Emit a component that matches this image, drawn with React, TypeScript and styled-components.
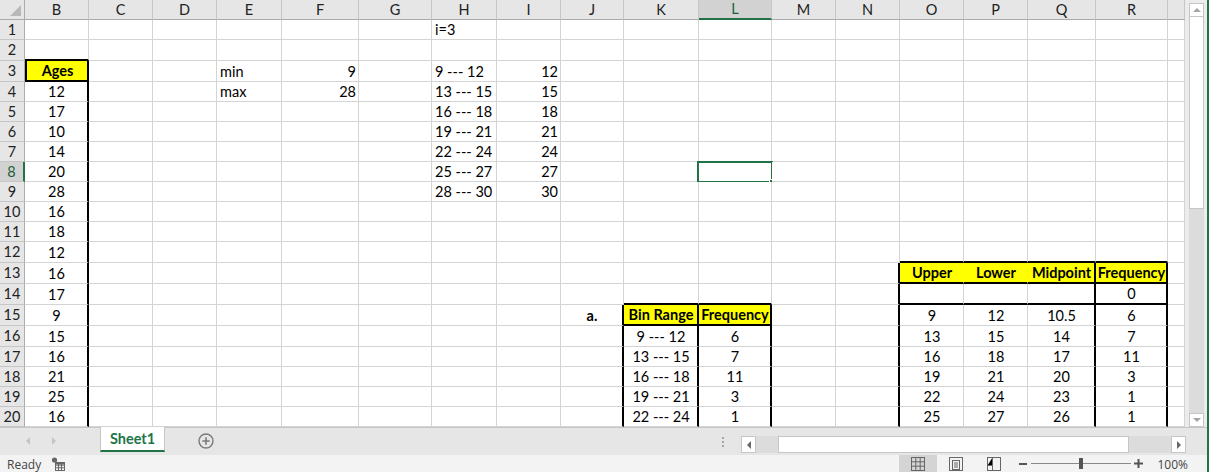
import React from 'react';
import styled, { createGlobalStyle } from 'styled-components';

const GlobalStyle = createGlobalStyle`
  *, *::before, *::after { box-sizing: border-box; }
  html, body { margin: 0; padding: 0; background: #fff; overflow: hidden; }
  body { font-family: Lato, "Liberation Sans", sans-serif; }
`;

const COLS: [string, number][] = [
  ['B', 64], ['C', 64], ['D', 64], ['E', 65], ['F', 77], ['G', 73], ['H', 65], ['I', 64], ['J', 63],
  ['K', 75], ['L', 73], ['M', 64], ['N', 64], ['O', 64], ['P', 64], ['Q', 68], ['R', 72], ['S', 17],
];
// heights of rows 1..21 as they appear in the screenshot
const ROW_H = [20, 21, 21, 20, 20, 20, 20, 20, 20, 20, 20, 21, 21, 21, 21, 21, 20, 20, 20, 20, 1];
const ROWS = ROW_H.length;
const YELLOW = '#ffff00';
const GREEN = '#217346';

type Align = 'l' | 'c' | 'r';
interface CellData { v: string; a?: Align; b?: boolean; fill?: string }

const data: Record<string, CellData> = {};
const put = (key: string, v: string, a: Align = 'c', b = false, fill?: string) => {
  data[key] = { v, a, b, fill };
};

put('H1', 'i=3', 'l');
put('B3', 'Ages', 'c', true, YELLOW);
[12, 17, 10, 14, 20, 28, 16, 18, 12, 16, 17, 9, 15, 16, 21, 25, 16].forEach((n, i) => put(`B${i + 4}`, String(n)));
put('E3', 'min', 'l');
put('F3', '9', 'r');
put('E4', 'max', 'l');
put('F4', '28', 'r');
['9 --- 12', '13 --- 15', '16 --- 18', '19 --- 21', '22 --- 24', '25 --- 27', '28 --- 30'].forEach((s, i) => put(`H${i + 3}`, s, 'l'));
[12, 15, 18, 21, 24, 27, 30].forEach((n, i) => put(`I${i + 3}`, String(n), 'r'));
put('J15', 'a.', 'c', true);
put('K15', 'Bin Range', 'c', true, YELLOW);
put('L15', 'Frequency', 'c', true, YELLOW);
['9 --- 12', '13 --- 15', '16 --- 18', '19 --- 21', '22 --- 24'].forEach((s, i) => put(`K${i + 16}`, s));
['6', '7', '11', '3', '1'].forEach((s, i) => put(`L${i + 16}`, s));
put('O13', 'Upper', 'c', true, YELLOW);
put('P13', 'Lower', 'c', true, YELLOW);
put('Q13', 'Midpoint', 'c', true, YELLOW);
put('R13', 'Frequency', 'c', true, YELLOW);
put('R14', '0');
const oVals = ['9', '13', '16', '19', '22', '25'];
const pVals = ['12', '15', '18', '21', '24', '27'];
const qVals = ['10.5', '14', '17', '20', '23', '26'];
const rVals = ['6', '7', '11', '3', '1', '1'];
oVals.forEach((s, i) => {
  put(`O${i + 15}`, s);
  put(`P${i + 15}`, pVals[i]);
  put(`Q${i + 15}`, qVals[i]);
  put(`R${i + 15}`, rVals[i]);
});

const thickRight = (c: string, r: number) =>
  (c === 'B' && r >= 3) ||
  ((c === 'J' || c === 'K' || c === 'L') && r >= 15) ||
  ((c === 'N' || c === 'Q' || c === 'R') && r >= 13);

const thickBottom = (c: string, r: number) =>
  (c === 'B' && (r === 2 || r === 3)) ||
  ((c === 'K' || c === 'L') && (r === 14 || r === 15)) ||
  (['O', 'P', 'Q', 'R'].includes(c) && (r === 12 || r === 13 || r === 14));

const Frame = styled.div`
  display: flex;
  width: 1212px;
  height: 472px;
  background: #fff;
`;

const Body = styled.div`
  display: flex;
  flex-direction: column;
  width: 1207px;
  height: 472px;
`;

const EdgeLine = styled.div`
  width: 2px;
  height: 472px;
  background: ${GREEN};
`;

const Main = styled.div`
  display: flex;
  height: 427px;
`;

const Sheet = styled.div`
  display: grid;
  grid-template-columns: 25px ${COLS.map(([, w]) => `${w}px`).join(' ')};
  grid-template-rows: 20px ${ROW_H.map(h => `${h}px`).join(' ')};
  width: 1185px;
  height: 427px;
  overflow: hidden;
  font-size: 14.5px;
  color: #000;
`;

const Corner = styled.div`
  position: relative;
  background: #e6e6e6;
  border-right: 1px solid #ababab;
  border-bottom: 1px solid #ababab;
`;

const CornerTri = styled.div`
  position: absolute;
  right: 3px;
  bottom: 3px;
  width: 0;
  height: 0;
  border-left: 11px solid transparent;
  border-bottom: 11px solid #b8b8b8;
`;

const ColHead = styled.div<{ $sel?: boolean }>`
  display: flex;
  align-items: center;
  justify-content: center;
  background: ${p => (p.$sel ? '#d2d2d2' : '#e6e6e6')};
  border-right: 1px solid #c6c6c6;
  border-bottom: ${p => (p.$sel ? `2px solid ${GREEN}` : '1px solid #ababab')};
  color: ${p => (p.$sel ? '#1d5e38' : '#222')};
  font-size: 14.5px;
  line-height: 1;
  padding-top: 1px;
`;

const RowHead = styled.div<{ $sel?: boolean }>`
  display: flex;
  align-items: center;
  justify-content: center;
  overflow: hidden;
  background: ${p => (p.$sel ? '#d2d2d2' : '#e6e6e6')};
  border-bottom: 1px solid #c6c6c6;
  border-right: ${p => (p.$sel ? `2px solid ${GREEN}` : '1px solid #ababab')};
  color: ${p => (p.$sel ? '#1d5e38' : '#222')};
  font-size: 14.5px;
  line-height: 1;
  padding-top: 1px;
`;

const Cell = styled.div<{ $align: Align; $bold: boolean; $fill?: string; $tr: boolean; $tb: boolean; $tl: boolean }>`
  position: relative;
  display: flex;
  align-items: center;
  justify-content: ${p => (p.$align === 'l' ? 'flex-start' : p.$align === 'r' ? 'flex-end' : 'center')};
  padding: 2px 2px 0 3px;
  background: ${p => p.$fill || '#fff'};
  border-right: ${p => (p.$tr ? '2px solid #000' : `1px solid ${p.$fill || '#d4d4d4'}`)};
  border-bottom: ${p => (p.$tb ? '2px solid #000' : '1px solid #d4d4d4')};
  border-left: ${p => (p.$tl ? '2px solid #000' : 'none')};
  font-weight: ${p => (p.$bold ? 700 : 400)};
  white-space: nowrap;
  line-height: 1;
`;

const Selection = styled.div`
  position: absolute;
  left: -2px;
  top: -1px;
  right: -2px;
  bottom: -2px;
  border: 2px solid ${GREEN};
  pointer-events: none;
`;

const Handle = styled.div`
  position: absolute;
  right: -4px;
  bottom: -4px;
  width: 6px;
  height: 6px;
  background: ${GREEN};
  border-left: 1px solid #fff;
  border-top: 1px solid #fff;
`;

const VScrollArea = styled.div`
  display: flex;
  flex-direction: column;
  width: 22px;
  height: 427px;
  padding: 3px 3px 0 4px;
  background: #ececec;
`;

const VTrack = styled.div`
  display: flex;
  flex-direction: column;
  flex: 1;
  background: #dcdcdc;
`;

const ScrollBtn = styled.div<{ $w: number; $h: number }>`
  display: flex;
  align-items: center;
  justify-content: center;
  width: ${p => p.$w}px;
  height: ${p => p.$h}px;
  flex: none;
  background: #fff;
  border: 1px solid #c6c6c6;
`;

const VThumb = styled.div`
  height: 192px;
  background: #fff;
  border: 1px solid #c6c6c6;
  border-top: none;
`;

const Spacer = styled.div`
  flex: 1;
`;

const TabBar = styled.div`
  display: flex;
  align-items: flex-start;
  height: 28px;
  background: #e6e6e6;
  border-top: 1px solid #c6c6c6;
`;

const NavArea = styled.div`
  display: flex;
  align-items: center;
  width: 100px;
  height: 26px;
  padding-left: 26px;
  gap: 22px;
`;

const SheetTab = styled.div`
  display: flex;
  align-items: center;
  justify-content: center;
  width: 65px;
  height: 25px;
  margin-top: -1px;
  background: #fff;
  border-left: 1px solid #c6c6c6;
  border-right: 1px solid #c6c6c6;
  border-bottom: 2px solid ${GREEN};
  color: ${GREEN};
  font-weight: 700;
  font-size: 14.5px;
`;

const AddBtn = styled.div`
  display: flex;
  align-items: center;
  width: 16px;
  height: 26px;
  margin-left: 33px;
`;

const DotsBox = styled.div`
  display: flex;
  flex-direction: column;
  align-items: center;
  gap: 2px;
  width: 4px;
  margin: 9px 16px 0 auto;
`;

const Dot = styled.div`
  width: 2px;
  height: 2px;
  background: #a6a6a6;
`;

const HScroll = styled.div`
  display: flex;
  width: 445px;
  height: 17px;
  margin-top: 8px;
  margin-right: 21px;
`;

const HTrack = styled.div`
  display: flex;
  flex: 1;
  background: #dcdcdc;
  padding-left: 22px;
`;

const HThumb = styled.div`
  width: 351px;
  height: 17px;
  background: #fff;
  border: 1px solid #c6c6c6;
`;

const StatusBar = styled.div`
  display: flex;
  align-items: center;
  height: 17px;
  background: #f3f3f3;
  font-family: "Open Sans", "Noto Sans", sans-serif;
  font-size: 12px;
  color: #444;
`;

const Ready = styled.span`
  width: 51px;
  padding-left: 7px;
  line-height: 17px;
  padding-top: 2px;
`;

const ViewBtn = styled.div<{ $active?: boolean }>`
  display: flex;
  align-items: center;
  justify-content: center;
  width: 38px;
  height: 17px;
  background: ${p => (p.$active ? '#d4d4d4' : 'transparent')};
`;

const ZoomBox = styled.div`
  display: flex;
  align-items: center;
  margin-left: 6px;
`;

const Slider = styled.div`
  position: relative;
  width: 100px;
  height: 17px;
  margin: 0 3px 0 4px;
`;

const SliderLine = styled.div`
  position: absolute;
  left: 0;
  right: 0;
  top: 8px;
  height: 1px;
  background: #8a8a8a;
`;

const SliderThumb = styled.div`
  position: absolute;
  left: 48px;
  top: 3px;
  width: 4px;
  height: 11px;
  background: #555;
`;

const Percent = styled.span`
  margin-left: 14px;
  padding-top: 2px;
  color: #444;
`;

const Tri = ({ dir, color, size = 4 }: { dir: 'up' | 'down' | 'left' | 'right'; color: string; size?: number }) => {
  const s = size;
  const pts =
    dir === 'up' ? `0,${s} ${s},0 ${2 * s},${s}` :
    dir === 'down' ? `0,0 ${2 * s},0 ${s},${s}` :
    dir === 'left' ? `${s},0 ${s},${2 * s} 0,${s}` :
    `0,0 0,${2 * s} ${s},${s}`;
  const w = dir === 'up' || dir === 'down' ? 2 * s : s;
  const h = dir === 'up' || dir === 'down' ? s : 2 * s;
  return (
    <svg width={w} height={h} viewBox={`0 0 ${w} ${h}`}>
      <polygon points={pts} fill={color} />
    </svg>
  );
};

const PlusCircle = () => (
  <svg width="16" height="16" viewBox="0 0 16 16">
    <circle cx="8" cy="8" r="7" fill="none" stroke="#7a7a7a" strokeWidth="1.4" />
    <path d="M8 4.3V11.7M4.3 8H11.7" stroke="#7a7a7a" strokeWidth="1.6" />
  </svg>
);

const MacroIcon = () => (
  <svg width="14" height="14" viewBox="0 0 14 14">
    <circle cx="3.5" cy="3" r="2.6" fill="#666" />
    <rect x="4.5" y="5.5" width="9" height="8" fill="none" stroke="#666" strokeWidth="1" />
    <path d="M4.5 8.2H13.5M4.5 10.8H13.5M7.5 5.5V13.5M10.5 5.5V13.5" stroke="#666" strokeWidth="1" />
    <rect x="4.5" y="5.5" width="9" height="2" fill="#666" />
  </svg>
);

const NormalIcon = () => (
  <svg width="14" height="14" viewBox="0 0 14 14">
    <rect x="0.5" y="0.5" width="13" height="13" fill="none" stroke="#666" />
    <path d="M0.5 4.8H13.5M0.5 9.2H13.5M4.8 0.5V13.5M9.2 0.5V13.5" stroke="#666" />
  </svg>
);

const LayoutIcon = () => (
  <svg width="14" height="14" viewBox="0 0 14 14">
    <rect x="0.5" y="0.5" width="13" height="13" fill="none" stroke="#666" />
    <rect x="3.5" y="3.5" width="7" height="9" fill="none" stroke="#666" />
    <path d="M5 6H9M5 8H9M5 10H9" stroke="#666" />
  </svg>
);

const BreakIcon = () => (
  <svg width="14" height="14" viewBox="0 0 14 14">
    <rect x="0.5" y="0.5" width="13" height="13" fill="none" stroke="#666" />
    <path d="M5.5 0.5V8.5H0.5M5.5 8.5V13.5" stroke="#666" />
  </svg>
);

export default function App() {
  const cells: React.ReactNode[] = [];
  cells.push(
    <Corner key="corner">
      <CornerTri />
    </Corner>,
  );
  COLS.forEach(([c]) => {
    cells.push(
      <ColHead key={`h${c}`} $sel={c === 'L'}>
        {c === 'S' ? '' : c}
      </ColHead>,
    );
  });
  for (let r = 1; r <= ROWS; r++) {
    const visible = ROW_H[r - 1] > 4;
    cells.push(
      <RowHead key={`r${r}`} $sel={r === 8}>
        {visible ? r : ''}
      </RowHead>,
    );
    COLS.forEach(([c]) => {
      const d = data[`${c}${r}`];
      cells.push(
        <Cell
          key={`${c}${r}`}
          $align={d?.a || 'c'}
          $bold={!!d?.b}
          $fill={d?.fill}
          $tr={thickRight(c, r)}
          $tb={thickBottom(c, r)}
          $tl={c === 'B' && r === 3}
        >
          {d?.v}
          {c === 'L' && r === 8 && (
            <Selection>
              <Handle />
            </Selection>
          )}
        </Cell>,
      );
    });
  }

  return (
    <>
      <GlobalStyle />
      <Frame>
        <Body>
          <Main>
            <Sheet>{cells}</Sheet>
            <VScrollArea>
              <ScrollBtn $w={15} $h={14}>
                <Tri dir="up" color="#a6a6a6" />
              </ScrollBtn>
              <VTrack>
                <VThumb />
                <Spacer />
              </VTrack>
              <ScrollBtn $w={15} $h={14}>
                <Tri dir="down" color="#a6a6a6" />
              </ScrollBtn>
            </VScrollArea>
          </Main>
          <TabBar>
            <NavArea>
              <Tri dir="left" color="#c4c4c4" />
              <Tri dir="right" color="#c4c4c4" />
            </NavArea>
            <SheetTab>Sheet1</SheetTab>
            <AddBtn>
              <PlusCircle />
            </AddBtn>
            <DotsBox>
              <Dot />
              <Dot />
              <Dot />
            </DotsBox>
            <HScroll>
              <ScrollBtn $w={15} $h={17}>
                <Tri dir="left" color="#666" />
              </ScrollBtn>
              <HTrack>
                <HThumb />
              </HTrack>
              <ScrollBtn $w={15} $h={17}>
                <Tri dir="right" color="#666" />
              </ScrollBtn>
            </HScroll>
          </TabBar>
          <StatusBar>
            <Ready>Ready</Ready>
            <MacroIcon />
            <Spacer />
            <ViewBtn $active>
              <NormalIcon />
            </ViewBtn>
            <ViewBtn>
              <LayoutIcon />
            </ViewBtn>
            <ViewBtn>
              <BreakIcon />
            </ViewBtn>
            <ZoomBox>
              <svg width="8" height="8" viewBox="0 0 8 8">
                <path d="M0 4H8" stroke="#555" strokeWidth="2" />
              </svg>
              <Slider>
                <SliderLine />
                <SliderThumb />
              </Slider>
              <svg width="9" height="9" viewBox="0 0 9 9">
                <path d="M0 4.5H9M4.5 0V9" stroke="#555" strokeWidth="2" />
              </svg>
              <Percent>100%</Percent>
            </ZoomBox>
            <div style={{ width: 19 }} />
          </StatusBar>
        </Body>
        <EdgeLine />
      </Frame>
    </>
  );
}
